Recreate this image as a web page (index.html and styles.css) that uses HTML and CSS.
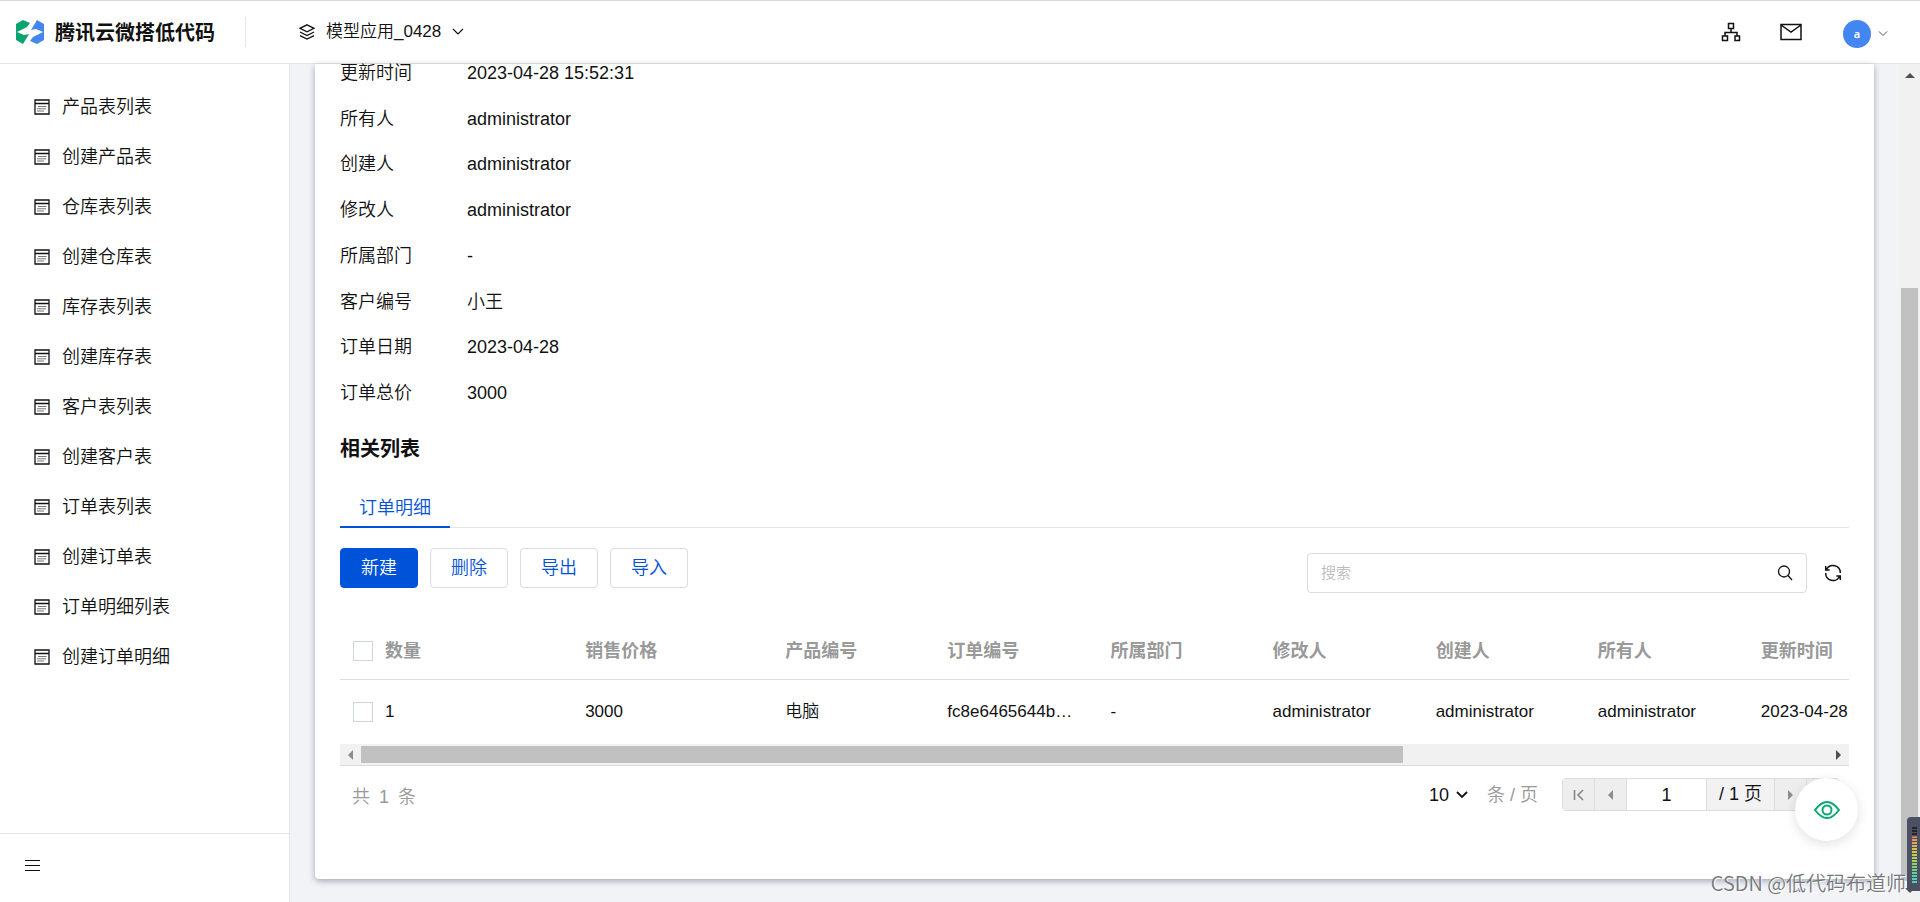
FILE: index.html
```html
<!DOCTYPE html>
<html lang="zh-CN">
<head>
<meta charset="utf-8">
<title>腾讯云微搭低代码</title>
<link rel="stylesheet" href="styles.css">
</head>
<body>
<svg class="sprite" aria-hidden="true">
  <symbol id="i-form" viewBox="0 0 16 16"><path d="M1 1h14v14H1zM1 4.500h14" fill="none" stroke="currentColor" stroke-width="1.300"/><path d="M4 7.500h8.500M3 9.800h9M3 12h7" fill="none" stroke="#777"/></symbol>
</svg>
<header class="topbar">
  <div class="brand">
    <svg class="brand-logo" viewBox="0 0 28 24"><path fill="#0aa56e" d="M0 4 7 0l7 3-3 4-10 5 7 3 5-1-6 10-7-4z"/><path fill="#4486f1" d="m28 20-7 4-7-3 3-4 10-5-7-3-5 1 6-10 7 4z"/></svg>
    <h1 class="brand-name">腾讯云微搭低代码</h1>
  </div>
  <button class="app-switch" type="button">
    <svg width="16" height="16" viewBox="0 0 16 16" fill="none" stroke="currentColor" stroke-width="1.300"><path d="M8 .8 15 4.300 8 7.800 1 4.300zM1 8l7 3.500L15 8M1 11.600l7 3.500 7-3.500"/></svg>
    <span>模型应用_0428</span>
    <svg width="12" height="8" viewBox="0 0 12 8" fill="none" stroke="currentColor" stroke-width="1.200"><path d="m1 1 5 5 5-5"/></svg>
  </button>
  <div class="top-actions">
    <button type="button" aria-label="组织架构"><svg width="20" height="20" viewBox="0 0 20 20" fill="none" stroke="currentColor" stroke-width="1.500"><path d="M7.500 1.500h5v5h-5zM1.500 14h5v4.500h-5zM14 14h4.500v4.500H14zM10 6.500v4M4 14v-3.500h12V14"/></svg></button>
    <button type="button" aria-label="消息"><svg width="22" height="18" viewBox="0 0 22 18" fill="none" stroke="currentColor" stroke-width="1.500"><path d="M1 1.500h20v15H1zM1 2l10 7 10-7"/></svg></button>
    <button class="account" type="button"><span class="avatar">a</span><svg width="10" height="6" viewBox="0 0 10 6" fill="none" stroke="#555"><path d="m1 .5 4 4 4-4"/></svg></button>
  </div>
</header>
<div class="body">
  <aside class="sidebar">
    <nav class="menu">
      <a href="#"><svg><use href="#i-form"/></svg>产品表列表</a>
      <a href="#"><svg><use href="#i-form"/></svg>创建产品表</a>
      <a href="#"><svg><use href="#i-form"/></svg>仓库表列表</a>
      <a href="#"><svg><use href="#i-form"/></svg>创建仓库表</a>
      <a href="#"><svg><use href="#i-form"/></svg>库存表列表</a>
      <a href="#"><svg><use href="#i-form"/></svg>创建库存表</a>
      <a href="#"><svg><use href="#i-form"/></svg>客户表列表</a>
      <a href="#"><svg><use href="#i-form"/></svg>创建客户表</a>
      <a href="#"><svg><use href="#i-form"/></svg>订单表列表</a>
      <a href="#"><svg><use href="#i-form"/></svg>创建订单表</a>
      <a href="#"><svg><use href="#i-form"/></svg>订单明细列表</a>
      <a href="#"><svg><use href="#i-form"/></svg>创建订单明细</a>
    </nav>
    <div class="sidebar-foot"><button type="button" aria-label="收起菜单"><svg width="16" height="12" viewBox="0 0 16 12" stroke="currentColor"><path d="M0 .5h15M0 5.500h15M0 10.500h15"/></svg></button></div>
  </aside>
  <main class="page">
    <section class="card">
      <dl class="details">
        <div><dt>更新时间</dt><dd>2023-04-28 15:52:31</dd></div>
        <div><dt>所有人</dt><dd>administrator</dd></div>
        <div><dt>创建人</dt><dd>administrator</dd></div>
        <div><dt>修改人</dt><dd>administrator</dd></div>
        <div><dt>所属部门</dt><dd>-</dd></div>
        <div><dt>客户编号</dt><dd>小王</dd></div>
        <div><dt>订单日期</dt><dd>2023-04-28</dd></div>
        <div><dt>订单总价</dt><dd>3000</dd></div>
      </dl>
      <h2 class="section-title">相关列表</h2>
      <div class="tabs" role="tablist"><button class="tab" type="button" role="tab" aria-selected="true">订单明细</button></div>
      <div class="toolbar">
        <div class="buttons">
          <button class="btn btn-primary" type="button">新建</button>
          <button class="btn" type="button">删除</button>
          <button class="btn" type="button">导出</button>
          <button class="btn" type="button">导入</button>
        </div>
        <div class="search-group">
          <label class="search"><input type="text" placeholder="搜索" aria-label="搜索"><svg width="16" height="18" viewBox="0 0 16 18" fill="none" stroke="currentColor" stroke-width="1.300"><circle cx="7" cy="7.500" r="5.500"/><path d="m11 11.500 4 4.500"/></svg></label>
          <button class="refresh" type="button" aria-label="刷新"><svg width="18" height="18" viewBox="0 0 18 18" fill="none" stroke="currentColor" stroke-width="1.500"><path d="M2.500 5.500A7.300 7.300 0 0 1 16.300 9M1.700 9a7.300 7.300 0 0 0 13.800 3.500M1.700 2v4h4M16.300 16v-4h-4"/></svg></button>
        </div>
      </div>
      <div class="table-wrap">
        <table>
          <colgroup><col class="c-check"><col class="c-wide"><col class="c-wide"><col><col><col><col><col><col><col></colgroup>
          <thead><tr><th><input type="checkbox" aria-label="全选"></th><th>数量</th><th>销售价格</th><th>产品编号</th><th>订单编号</th><th>所属部门</th><th>修改人</th><th>创建人</th><th>所有人</th><th>更新时间</th></tr></thead>
          <tbody><tr><td><input type="checkbox" aria-label="选择第 1 行"></td><td>1</td><td>3000</td><td>电脑</td><td>fc8e6465644b4f0a</td><td>-</td><td>administrator</td><td>administrator</td><td>administrator</td><td>2023-04-28</td></tr></tbody>
        </table>
      </div>
      <div class="hscroll"><i class="arrow left"></i><div class="hscroll-track"><div class="hscroll-thumb"></div></div><i class="arrow right"></i></div>
      <div class="pager">
        <span class="total"><span>共</span><span>1</span><span>条</span></span>
        <button class="page-size" type="button">10 <svg width="12" height="8" viewBox="0 0 12 8" fill="none" stroke="currentColor" stroke-width="1.800"><path d="m1 1 5 5 5-5"/></svg></button>
        <span class="unit">条 / 页</span>
        <div class="page-nav">
          <button type="button" aria-label="首页"><svg width="12" height="12" viewBox="0 0 12 12" fill="none" stroke="#888" stroke-width="1.600"><path d="M1.500 1v10M10 1 5 6l5 5"/></svg></button>
          <button type="button" aria-label="上一页"><i class="arrow left"></i></button>
          <input type="text" value="1" aria-label="页码">
          <span class="page-count">/ 1 页</span>
          <button type="button" aria-label="下一页"><i class="arrow right"></i></button>
          <button type="button" aria-label="末页"></button>
        </div>
      </div>
    </section>
  </main>
  <div class="vscroll"><i class="arrow up"></i><div class="vscroll-thumb"></div><i class="arrow down"></i></div>
</div>
<button class="preview" type="button" aria-label="预览"><svg width="28" height="20" viewBox="0 0 28 20" fill="none" stroke="#0aa971" stroke-width="2"><path d="M2 10q12-16 24 0-12 16-24 0z"/><circle cx="14" cy="10" r="4.500"/></svg></button>
<div class="watermark">CSDN @低代码布道师</div>
<div class="meter"><div class="meter-bars"></div></div>
</body>
</html>
```
FILE: styles.css
```css
* { box-sizing: border-box; }
body {
  margin: 0;
  height: 100vh;
  display: flex;
  flex-direction: column;
  overflow: hidden;
  background: #fff;
  color: #111;
  font: 350 18px/24px "Liberation Sans", "Noto Sans CJK SC", sans-serif;
}
button, input { font: inherit; color: inherit; }
button { border: 0; padding: 0; background: none; }
svg { display: block; flex: none; }
.sprite { display: none; }
h1, h2, dl, dd { margin: 0; }

.topbar {
  height: 64px;
  flex: none;
  display: flex;
  align-items: center;
  padding: 0 32px 0 16px;
  border-top: 1px solid #d9d9d9;
  border-bottom: 1px solid #e3e5e9;
}
.brand {
  width: 230px;
  height: 30px;
  display: flex;
  align-items: center;
  gap: 11px;
  border-right: 1px solid #e3e5e9;
}
.brand-logo { width: 28px; height: 24px; }
.brand-name { padding-top: 2px; font-size: 20px; font-weight: 700; }
.app-switch { display: flex; align-items: center; gap: 11px; margin-left: 53px; font-size: 17px; }
.top-actions { margin-left: auto; display: flex; align-items: center; gap: 39px; }
.account { display: flex; align-items: center; gap: 7px; margin: 4px 0 0 2px; }
.avatar {
  width: 28px;
  height: 28px;
  border-radius: 50%;
  background: #4486f1;
  color: #fff;
  font: 600 11px/28px "Noto Sans", sans-serif;
}

.body { flex: 1; min-height: 0; display: flex; }
.sidebar {
  width: 290px;
  flex: none;
  display: flex;
  flex-direction: column;
  border-right: 1px solid #e3e5ea;
}
.menu { flex: 1; padding-top: 18px; }
.menu a {
  height: 50px;
  display: flex;
  align-items: center;
  gap: 12px;
  padding-left: 34px;
  color: inherit;
  text-decoration: none;
}
.menu svg { width: 16px; height: 16px; }
.sidebar-foot { height: 69px; padding: 20px 25px; border-top: 1px solid #e3e5e9; }

.page { flex: 1; min-width: 0; padding: 0 25px; background: #f2f3f7; }
.card {
  padding: 0 25px 68px;
  background: #fff;
  border-radius: 0 0 4px 4px;
  box-shadow: 0 2px 6px rgba(40, 50, 80, .4);
}
.details { min-height: 338px; display: grid; align-content: space-between; line-height: 18px; }
.details div { display: grid; grid-template-columns: 127px 1fr; }
.section-title { margin-top: 33px; font-size: 20px; line-height: 28px; font-weight: 700; }
.tabs { margin-top: 25px; display: flex; box-shadow: inset 0 -1px #e3e5e9; }
.tab { height: 40px; padding: 2px 19px 0; color: #0052d9; border-bottom: 2px solid #0052d9; }
.toolbar { margin-top: 20px; min-height: 45px; display: flex; justify-content: space-between; }
.buttons { display: flex; align-items: flex-start; gap: 12px; }
.btn {
  width: 78px;
  height: 40px;
  border: 1px solid #dcdcdc;
  border-radius: 4px;
  color: #0052d9;
}
.btn-primary { background: #0052d9; border-color: #0052d9; color: #fff; }
.search-group { display: flex; align-items: flex-end; gap: 17px; padding-right: 7px; }
.search {
  width: 500px;
  height: 40px;
  display: flex;
  align-items: center;
  padding: 0 13px;
  border: 1px solid #dcdcdc;
  border-radius: 4px;
}
.search input { flex: 1; border: 0; padding: 0; outline: 0; font-size: 15px; }
.search input::placeholder { color: #bbb; }
.refresh { height: 40px; }

.table-wrap { margin-top: 31px; overflow: hidden; }
table { width: 1583px; table-layout: fixed; border-collapse: collapse; }
col:nth-child(odd) { width: 163px; }
col:nth-child(even) { width: 162px; }
col.c-check { width: 45px; }
col.c-wide { width: 200px; }
th, td {
  padding: 0 30px 0 0;
  text-align: left;
  white-space: nowrap;
  overflow: hidden;
  text-overflow: ellipsis;
}
th { height: 55px; color: #999; font-weight: 700; border-bottom: 1px solid #dcdcdc; }
td { height: 65px; font-size: 17px; }
th:first-child, td:first-child { padding: 0 0 0 13px; }
table input {
  appearance: none;
  display: block;
  width: 20px;
  height: 20px;
  margin: 0;
  border: 1px solid #cfd5de;
}

.arrow { width: 0; height: 0; border: 5px solid transparent; }
.arrow.left { border-right-color: #8c8c8c; border-left: 0; }
.arrow.right { border-left-color: #505050; border-right: 0; }
.arrow.up { border-bottom-color: #505050; border-top: 0; }
.arrow.down { border-top-color: #505050; border-bottom: 0; }
.hscroll {
  height: 22px;
  display: flex;
  align-items: center;
  justify-content: space-between;
  gap: 8px;
  padding: 0 8px;
  background: #f1f1f1;
  border-bottom: 1px solid #dcdcdc;
}
.hscroll-track { flex: 1; }
.hscroll-thumb { width: 71%; height: 17px; background: #c1c1c1; }

.pager { margin-top: 12px; display: flex; align-items: center; padding: 0 9px 0 12px; }
.total { margin-right: auto; padding-top: 4px; display: flex; gap: 9px; color: #999; }
.page-size { display: flex; align-items: center; gap: 7px; }
.unit { margin: 0 24px 0 19px; color: #999; }
.page-nav {
  height: 33px;
  display: flex;
  border: 1px solid #dcdcdc;
  border-radius: 4px;
  background: #f2f2f2;
}
.page-nav > * { width: 32px; border-right: 1px solid #dcdcdc; }
.page-nav > :last-child { border-right: 0; }
.page-nav button { display: grid; place-items: center; background: #eee; }
.page-nav input { width: 80px; padding: 0; border-width: 0 1px 0 0; text-align: center; background: #fff; }
.page-nav .page-count { width: 68px; text-align: center; line-height: 31px; }
.page-nav .arrow.right { border-left-color: #8c8c8c; }

.vscroll {
  width: 21px;
  flex: none;
  display: flex;
  flex-direction: column;
  align-items: center;
  padding: 9px 0;
  background: #f1f1f1;
}
.vscroll-thumb { width: 17px; height: 593px; margin: auto 0 7px; background: #c1c1c1; }

.preview {
  position: absolute;
  right: 62px;
  bottom: 61px;
  width: 63px;
  height: 63px;
  display: grid;
  place-items: center;
  border-radius: 50%;
  background: #fff;
  box-shadow: 0 3px 12px rgba(0, 0, 0, .12);
}
.watermark {
  position: absolute;
  right: 14px;
  bottom: 7px;
  color: #77787b;
  font: 350 20px/24px "Noto Sans CJK SC", sans-serif;
  text-shadow: 1px 1px 1px #fff;
}
.meter {
  position: absolute;
  right: 0;
  bottom: 11px;
  width: 13px;
  height: 74px;
  padding: 9px 3px 8px 5px;
  border-radius: 4px 0 0 4px;
  background: #4b5063;
}
.meter-bars {
  height: 100%;
  background:
    repeating-linear-gradient(#4b5063 0 1px, transparent 1px 3px),
    linear-gradient(#22252e 0 17%, #e8895a 19%, #dcc04a 40%, #b5d254 58%, #6fcf8a 78%, #4fd0c0);
}
```
